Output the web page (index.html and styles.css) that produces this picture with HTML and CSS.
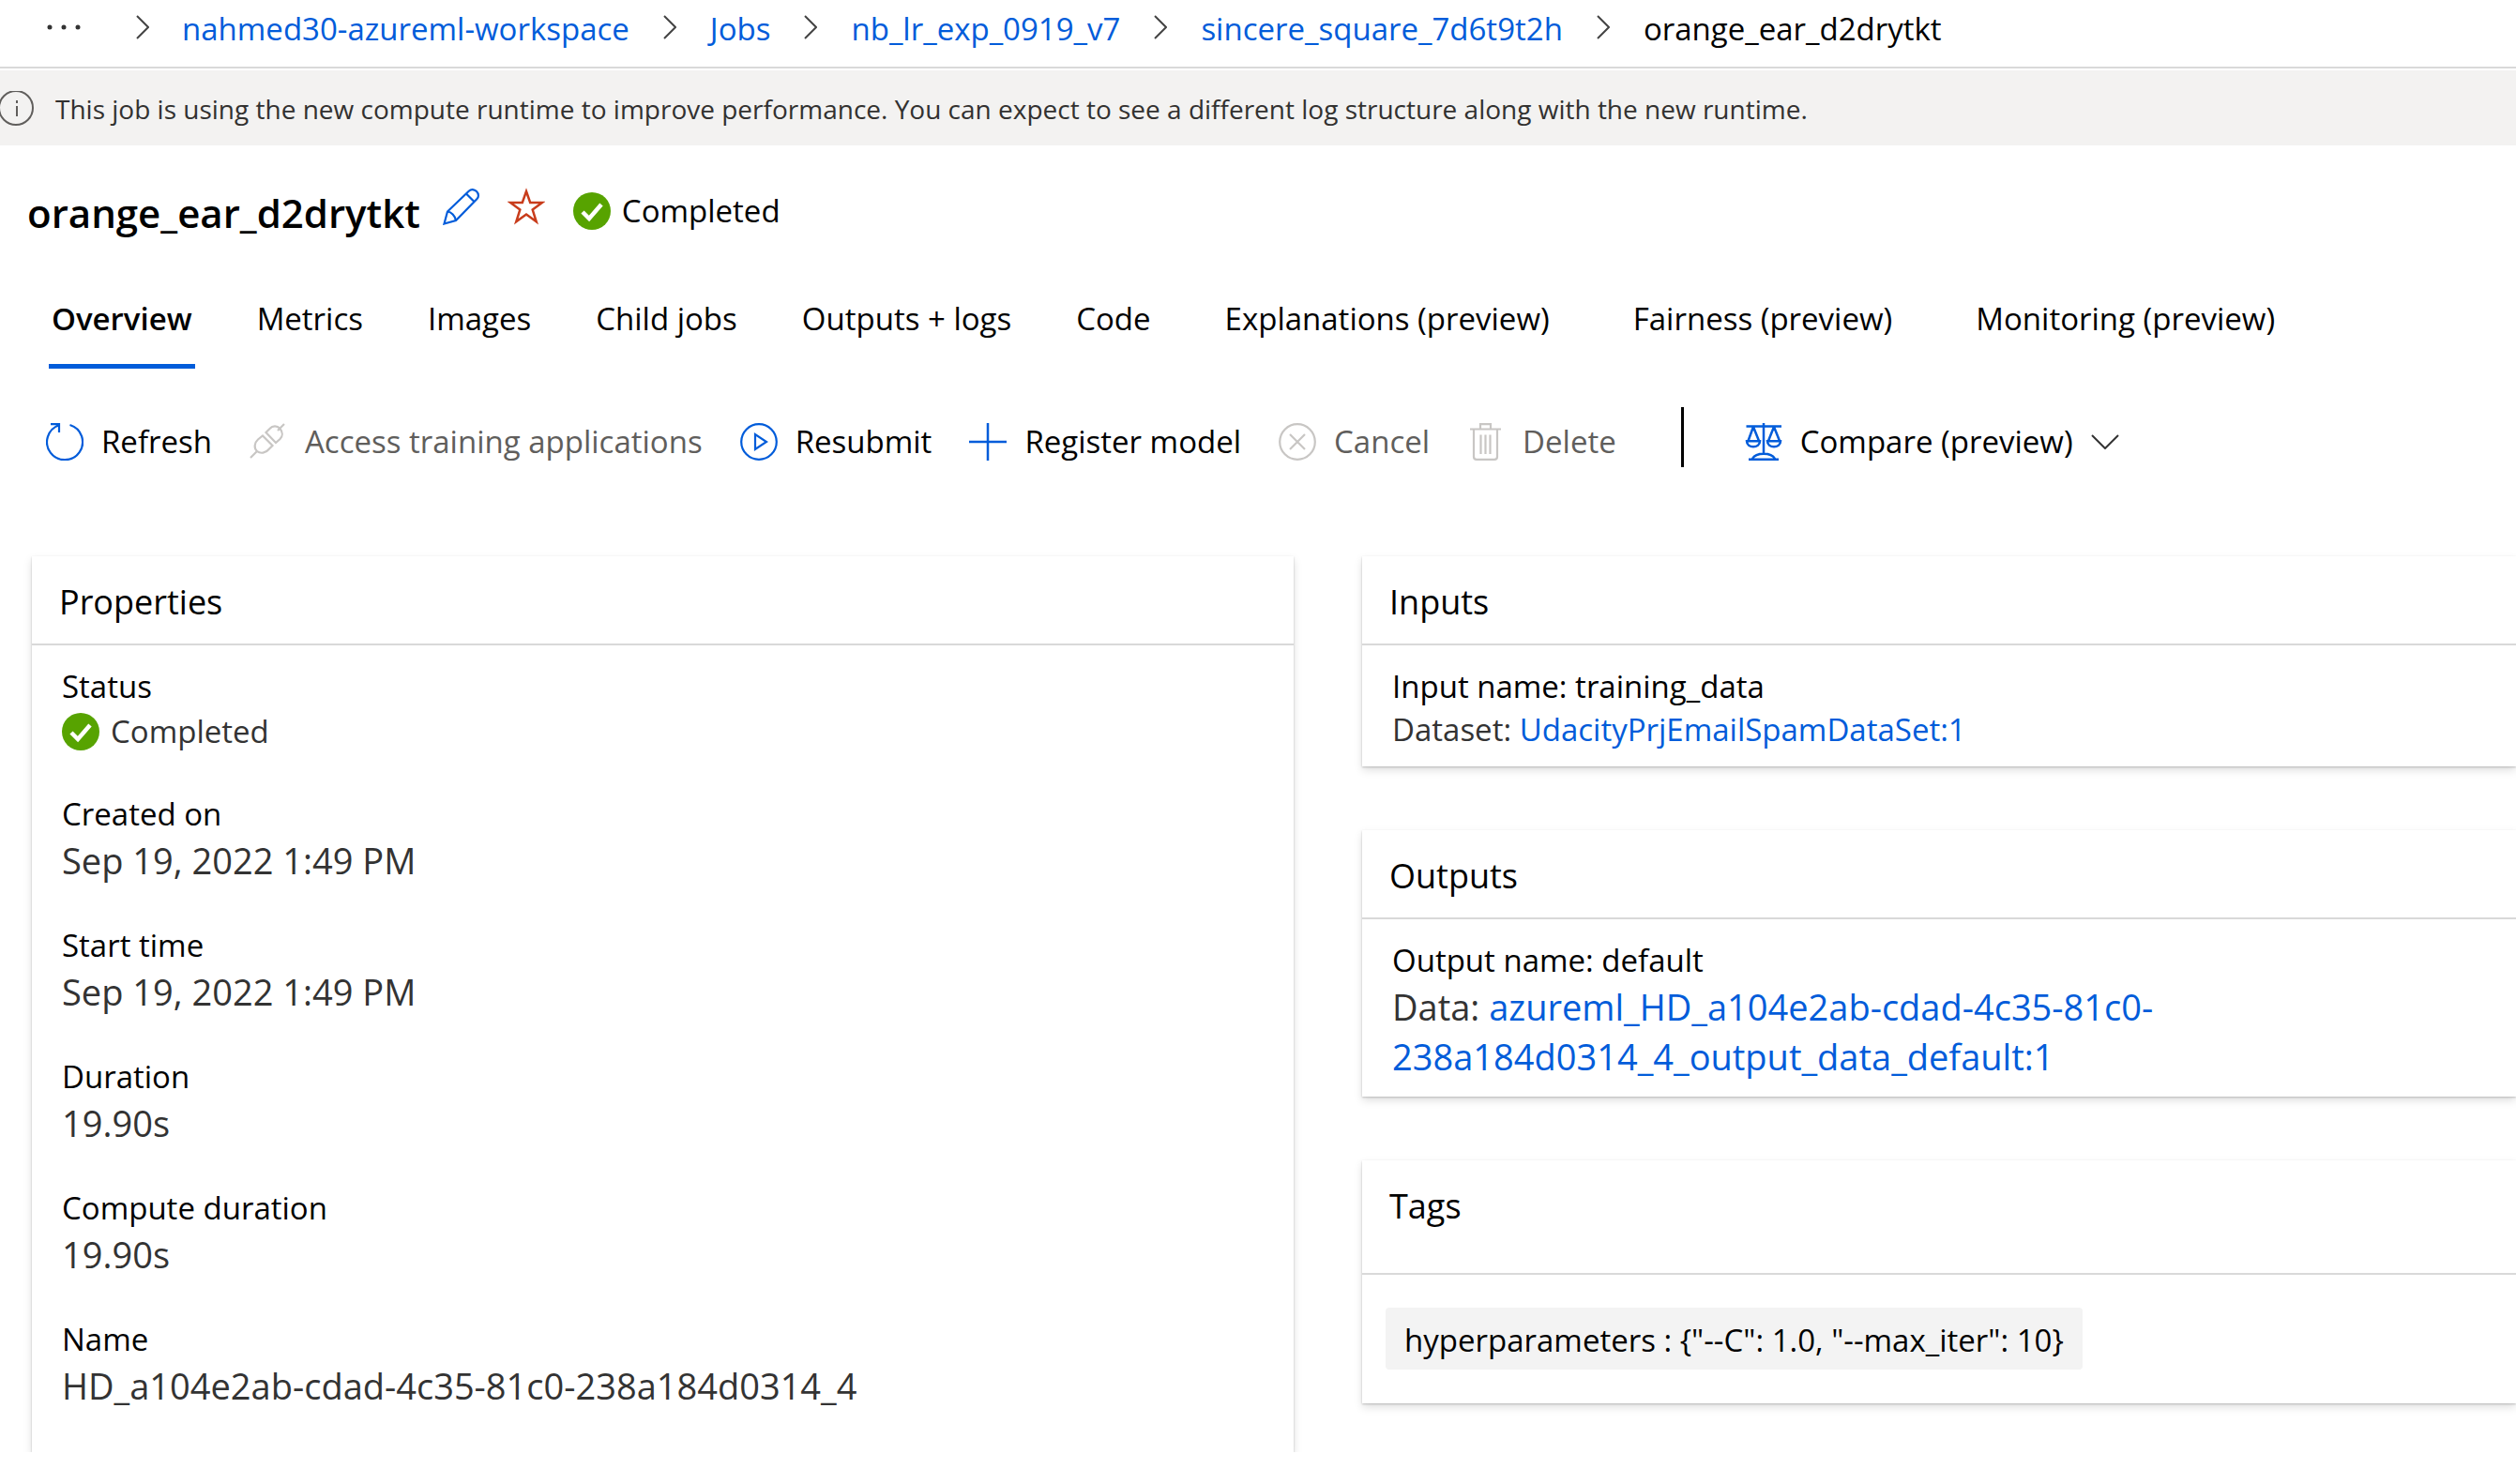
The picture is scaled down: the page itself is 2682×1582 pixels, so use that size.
FILE: index.html
```html
<!DOCTYPE html>
<html lang="en">
<head>
<meta charset="utf-8">
<meta name="viewport" content="width=device-width, initial-scale=1">
<title>orange_ear_d2drytkt</title>
<link rel="stylesheet" href="styles.css">
</head>
<body>
<nav class="breadcrumb" aria-label="Breadcrumb">
  <button class="more" type="button" aria-label="More"><svg width="36" height="6" viewBox="0 0 36 6"><g fill="#333"><circle cx="3" cy="3" r="2.500"/><circle cx="18" cy="3" r="2.500"/><circle cx="33" cy="3" r="2.500"/></g></svg></button>
  <svg class="sep sep-first" viewBox="0 0 14 26"><path d="M1 1l12 12L1 25"/></svg>
  <a href="#">nahmed30-azureml-workspace</a>
  <svg class="sep" viewBox="0 0 14 26"><path d="M1 1l12 12L1 25"/></svg>
  <a href="#">Jobs</a>
  <svg class="sep" viewBox="0 0 14 26"><path d="M1 1l12 12L1 25"/></svg>
  <a href="#">nb_lr_exp_0919_v7</a>
  <svg class="sep" viewBox="0 0 14 26"><path d="M1 1l12 12L1 25"/></svg>
  <a href="#">sincere_square_7d6t9t2h</a>
  <svg class="sep" viewBox="0 0 14 26"><path d="M1 1l12 12L1 25"/></svg>
  <span>orange_ear_d2drytkt</span>
</nav>

<div class="banner" role="status">
  <svg width="36" height="38" viewBox="0 0 36 38" fill="none" stroke="#605e5c" stroke-width="2"><circle cx="17" cy="18" r="18"/><path d="M18 16v11M18 10v3"/></svg>
  <p>This job is using the new compute runtime to improve performance. You can expect to see a different log structure along with the new runtime.</p>
</div>

<header class="title-row">
  <h1>orange_ear_d2drytkt</h1>
  <button class="edit" type="button" aria-label="Edit name"><svg class="icon" viewBox="0 0 40 40" fill="none" stroke="#015cda" stroke-width="2.200"><path d="M1.500 38.500l3.500-13L28 3.500c2-2 5.500-2 8 .5s2.500 6 .5 8L14 35z"/><path d="M5 25.500c4 .5 8 4.500 9 9.500M25 6.500l8.500 8.500"/></svg></button>
  <button class="favorite" type="button" aria-label="Favorite"><svg class="icon" viewBox="0 0 40 40" fill="none" stroke="#c83c1b" stroke-width="2.500"><path d="M20 4l4.200 12H37L26.700 23.600l4 12.700L20 28.600 9.300 36.300l4-12.700L3 16h12.800z"/></svg></button>
  <span class="status">
    <svg class="icon" viewBox="0 0 40 40"><circle cx="20" cy="20" r="20" fill="#57a300"/><path d="M10 21l7 7 13-15" fill="none" stroke="#fff" stroke-width="4.500"/></svg>
    Completed
  </span>
</header>

<div class="tabs" role="tablist">
  <button class="tab active" role="tab" aria-selected="true" type="button">Overview</button>
  <button class="tab" role="tab" type="button">Metrics</button>
  <button class="tab" role="tab" type="button">Images</button>
  <button class="tab" role="tab" type="button">Child jobs</button>
  <button class="tab" role="tab" type="button">Outputs + logs</button>
  <button class="tab" role="tab" type="button">Code</button>
  <button class="tab preview" role="tab" type="button">Explanations (preview)</button>
  <button class="tab preview" role="tab" type="button">Fairness (preview)</button>
  <button class="tab preview" role="tab" type="button">Monitoring (preview)</button>
</div>

<div class="toolbar" role="toolbar">
  <button class="command" type="button"><svg class="icon" viewBox="0 0 40 40" fill="none" stroke="#015cda" stroke-width="2.200"><path d="M25.500 2A19 19 0 1 1 14 2.200M5 1.200h9V10"/></svg>Refresh</button>
  <button class="command" type="button" disabled><svg class="icon" viewBox="0 0 40 40" fill="none" stroke="#c8c6c4" stroke-width="2.200"><path d="M1 37l7-7M30 8l7-7M14 13.500L24.500 24l-4 4c-3 4-9 5-12.500 2s-3-9 1-12.500zM17.500 10l4-4c3-3.500 8-3.500 11 0s3 8 0 11l-4.500 4z"/></svg>Access training applications</button>
  <button class="command" type="button"><svg class="icon" viewBox="0 0 40 40" fill="none" stroke="#015cda" stroke-width="2.200"><circle cx="20" cy="20" r="18.800"/><path d="M16 12v16l12-8z"/></svg>Resubmit</button>
  <button class="command" type="button"><svg class="icon" viewBox="0 0 40 40" fill="none" stroke="#015cda" stroke-width="2.500"><path d="M20 0v40M0 20h40"/></svg>Register model</button>
  <button class="command" type="button" disabled><svg class="icon" viewBox="0 0 40 40" fill="none" stroke="#c8c6c4" stroke-width="2.200"><circle cx="20" cy="20" r="18.800"/><path d="M12 12l16 16M28 12L12 28"/></svg>Cancel</button>
  <button class="command" type="button" disabled><svg class="icon" viewBox="0 0 40 40" fill="none" stroke="#c8c6c4" stroke-width="2.200"><path d="M3 6.500h33M14 6V1.200h11V6M7 7v29q0 2.800 3 2.800h19q3 0 3-2.800V7M14.500 12.500V33M19.500 12.500V33M24.500 12.500V33"/></svg>Delete</button>
  <span class="divider"></span>
  <button class="command" type="button"><svg class="icon" viewBox="0 0 40 40" fill="none" stroke="#015cda" stroke-width="2.500"><path d="M20 0v33M1.500 3.500h37.500M9 4L3.500 19M9 4l6 15M31 4l-6 15M31 4l6 15M2 19.200h14c0 8-14 8-14 0zM24 19.200h14c0 8-14 8-14 0zM4 38.700h32M8 38c4-7 20-7 24 0"/></svg>Compare (preview)<svg class="caret" viewBox="0 0 30 16"><path d="M1 1l14 14L29 1"/></svg></button>
</div>

<main class="content">
  <section class="card properties">
    <h2>Properties</h2>
    <dl class="body">
      <div><dt>Status</dt><dd class="status"><svg class="icon" viewBox="0 0 40 40"><circle cx="20" cy="20" r="20" fill="#57a300"/><path d="M10 21l7 7 13-15" fill="none" stroke="#fff" stroke-width="4.500"/></svg>Completed</dd></div>
      <div><dt>Created on</dt><dd>Sep 19, 2022 1:49 PM</dd></div>
      <div><dt>Start time</dt><dd>Sep 19, 2022 1:49 PM</dd></div>
      <div><dt>Duration</dt><dd>19.90s</dd></div>
      <div><dt>Compute duration</dt><dd>19.90s</dd></div>
      <div><dt>Name</dt><dd>HD_a104e2ab-cdad-4c35-81c0-238a184d0314_4</dd></div>
    </dl>
  </section>
  <div class="column">
    <section class="card">
      <h2>Inputs</h2>
      <div class="body">
        <p>Input name: training_data</p>
        <p class="muted">Dataset: <a href="#">UdacityPrjEmailSpamDataSet:1</a></p>
      </div>
    </section>
    <section class="card">
      <h2>Outputs</h2>
      <div class="body">
        <p>Output name: default</p>
        <p class="muted large">Data: <a href="#">azureml_HD_a104e2ab-cdad-4c35-81c0-238a184d0314_4_output_data_default:1</a></p>
      </div>
    </section>
    <section class="card tags">
      <h2>Tags</h2>
      <div class="body"><span class="tag">hyperparameters : {"--C": 1.0, "--max_iter": 10}</span></div>
    </section>
  </div>
</main>
</body>
</html>
```
FILE: styles.css
```css
* {
  box-sizing: border-box;
}

body {
  margin: 0;
  overflow-x: hidden;
  background: #fff;
  color: #000;
  font: 33px/46px "Open Sans", "Noto Sans", sans-serif;
}

h1, h2, p, dl, dd {
  margin: 0;
}

a {
  color: #015cda;
  text-decoration: none;
}

button {
  padding: 0;
  border: 0;
  background: none;
  color: inherit;
  font: inherit;
  white-space: nowrap;
}

svg {
  display: block;
  flex: none;
}

.icon {
  width: 40px;
  height: 40px;
}

.breadcrumb {
  display: flex;
  align-items: flex-start;
  height: 73px;
  padding: 8px 0 0 50px;
  border-bottom: 2px solid #d9d9d9;
  white-space: nowrap;
}

.more {
  display: flex;
  padding-top: 18px;
}

.sep {
  width: 14px;
  height: 26px;
  margin: 8px 36px 0;
  fill: none;
  stroke: #444;
  stroke-width: 2;
}

.sep-first {
  margin: 8px 35px 0 59px;
}

.banner {
  display: flex;
  align-items: center;
  gap: 23px;
  min-height: 80px;
  margin-top: 2px;
  padding-top: 1px;
  background: #f3f2f1;
  color: #323130;
  font-size: 28px;
  line-height: 38px;
}

.title-row {
  display: flex;
  align-items: flex-start;
  padding: 43px 29px 0;
}

h1 {
  font-size: 42px;
  font-weight: 600;
  line-height: 58px;
}

.edit {
  margin: 2px 0 0 24px;
}

.favorite {
  margin: 2px 0 0 29px;
}

.status {
  display: flex;
  align-items: center;
  gap: 12px;
}

.title-row .status {
  margin: 4px 0 0 30px;
}

.tabs {
  display: flex;
  gap: 63px;
  padding: 61px 52px 0;
}

.tab {
  padding: 0 3px 25px;
  border-bottom: 5px solid transparent;
}

.tab.active {
  border-color: #015cda;
  font-weight: 600;
}

.tab.preview {
  margin: 0 10px;
}

.toolbar {
  display: flex;
  align-items: flex-start;
  gap: 40px;
  margin-top: 41px;
  padding-left: 49px;
}

.command {
  display: flex;
  align-items: center;
  gap: 19px;
  margin-top: 14px;
}

.command:disabled {
  color: #605e5c;
}

.divider {
  width: 3px;
  height: 64px;
  margin: 0 25px 0 29px;
  background: #000;
}

.caret {
  width: 30px;
  height: 16px;
  fill: none;
  stroke: #333;
  stroke-width: 2;
}

.content {
  display: grid;
  grid-template-columns: 1345fr 1230fr;
  gap: 73px;
  padding: 95px 0 36px 34px;
}

.column {
  display: flex;
  flex-direction: column;
  gap: 68px;
}

.card {
  background: #fff;
  box-shadow: 0 4px 9px rgba(0, 0, 0, 0.13), 0 1px 2px rgba(0, 0, 0, 0.2);
}

.properties {
  clip-path: inset(-12px -12px 0 -12px);
}

h2 {
  padding: 24px 29px 19px;
  border-bottom: 2px solid #d9d9d9;
  font-size: 36px;
  font-weight: 400;
  line-height: 50px;
}

.body {
  padding: 21px 32px 16px;
}

.properties .body {
  display: grid;
  gap: 41px;
  padding-bottom: 44px;
}

dd {
  color: #333;
  font-size: 38px;
  line-height: 53px;
}

dd.status {
  min-height: 49px;
  font-size: 33px;
  line-height: 46px;
}

.muted {
  color: #333;
}

.large {
  font-size: 38px;
  line-height: 53px;
}

.tags h2 {
  padding-bottom: 46px;
}

.tags .body {
  padding: 35px 25px 36px;
}

.tag {
  display: inline-block;
  padding: 12px 20px 8px;
  border-radius: 4px;
  background: #f3f3f3;
  vertical-align: top;
}
```
